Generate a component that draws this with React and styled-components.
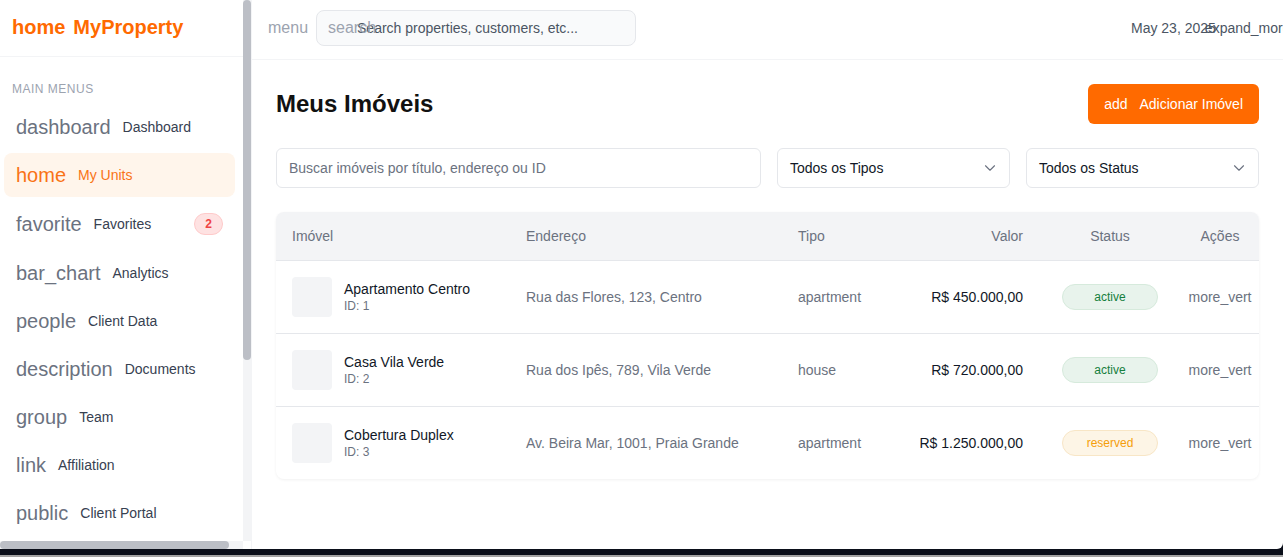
import React from 'react'
import styled, { createGlobalStyle } from 'styled-components'
import { ChevronDown } from 'lucide-react'

const GlobalStyle = createGlobalStyle`
  html, body {
    margin: 0;
    padding: 0;
    background: #0b0f1a;
    font-family: "Liberation Sans", Arial, sans-serif;
  }
  * { box-sizing: border-box; }
`

const menus = [
  { icon: 'dashboard', label: 'Dashboard' },
  { icon: 'home', label: 'My Units', active: true },
  { icon: 'favorite', label: 'Favorites', badge: 2 },
  { icon: 'bar_chart', label: 'Analytics' },
  { icon: 'people', label: 'Client Data' },
  { icon: 'description', label: 'Documents' },
  { icon: 'group', label: 'Team' },
  { icon: 'link', label: 'Affiliation' },
  { icon: 'public', label: 'Client Portal' },
]

const properties = [
  { id: 1, title: 'Apartamento Centro', address: 'Rua das Flores, 123, Centro', type: 'apartment', price: 'R$ 450.000,00', status: 'active' },
  { id: 2, title: 'Casa Vila Verde', address: 'Rua dos Ipês, 789, Vila Verde', type: 'house', price: 'R$ 720.000,00', status: 'active' },
  { id: 3, title: 'Cobertura Duplex', address: 'Av. Beira Mar, 1001, Praia Grande', type: 'apartment', price: 'R$ 1.250.000,00', status: 'reserved' },
]

function App() {
  return (
    <Page>
      <GlobalStyle />
      <Shell>
        <Sidebar>
          <SideBody>
            <SideScroll>
              <Brand>
                <span>home</span>
                <span>MyProperty</span>
              </Brand>
              <SectionLabel>Main Menus</SectionLabel>
              <NavList>
                {menus.map(m => (
                  <NavItem key={m.label} $active={m.active}>
                    <NavIcon $active={m.active}>{m.icon}</NavIcon>
                    <NavLabel $active={m.active}>{m.label}</NavLabel>
                    {m.badge && <Badge>{m.badge}</Badge>}
                  </NavItem>
                ))}
              </NavList>
            </SideScroll>
            <VTrack>
              <VThumb />
            </VTrack>
          </SideBody>
          <HBar>
            <HTrack>
              <HThumb />
            </HTrack>
            <Corner />
          </HBar>
        </Sidebar>

        <Main>
          <TopBar>
            <MenuIcon>menu</MenuIcon>
            <SearchWrap>
              <SearchIcon>search</SearchIcon>
              <SearchInput placeholder="Search properties, customers, etc..." />
            </SearchWrap>
            <DateGroup>
              <span>May 23, 2025</span>
              <ExpandIcon>expand_more</ExpandIcon>
            </DateGroup>
          </TopBar>

          <Content>
            <TitleRow>
              <Title>Meus Imóveis</Title>
              <AddButton>
                <span>add</span>
                <span>Adicionar Imóvel</span>
              </AddButton>
            </TitleRow>

            <Filters>
              <FilterInput placeholder="Buscar imóveis por título, endereço ou ID" />
              <SelectBox>
                <span>Todos os Tipos</span>
                <ChevronDown size={18} strokeWidth={1.5} color="#6b7280" />
              </SelectBox>
              <SelectBox>
                <span>Todos os Status</span>
                <ChevronDown size={18} strokeWidth={1.5} color="#6b7280" />
              </SelectBox>
            </Filters>

            <Card>
              <Table>
                <thead>
                  <tr>
                    <Th $w={234}>Imóvel</Th>
                    <Th $w={272}>Endereço</Th>
                    <Th $w={110}>Tipo</Th>
                    <Th $w={147} $align="right">Valor</Th>
                    <Th $w={142} $align="center">Status</Th>
                    <Th $w={78} $align="center" $tight>Ações</Th>
                  </tr>
                </thead>
                <tbody>
                  {properties.map(p => (
                    <tr key={p.id}>
                      <Td>
                        <PropCell>
                          <Thumb />
                          <div>
                            <PropName>{p.title}</PropName>
                            <PropId>ID: {p.id}</PropId>
                          </div>
                        </PropCell>
                      </Td>
                      <Td $muted>{p.address}</Td>
                      <Td $muted>{p.type}</Td>
                      <Td $align="right">{p.price}</Td>
                      <Td $align="center">
                        <Status $status={p.status}>{p.status}</Status>
                      </Td>
                      <Td $align="center" $muted $tight>more_vert</Td>
                    </tr>
                  ))}
                </tbody>
              </Table>
            </Card>
          </Content>
        </Main>
      </Shell>
    </Page>
  )
}

const Page = styled.div`
  height: 557px;
  background: #0b0f1a;
  border-bottom: 2px solid #a3a3a3;
`

const Shell = styled.div`
  display: flex;
  height: 549px;
  background: #fff;
  border-bottom-right-radius: 6px;
  overflow: hidden;
`

const Sidebar = styled.aside`
  width: 252px;
  flex-shrink: 0;
  height: 100%;
  display: flex;
  flex-direction: column;
  background: #fff;
  border-right: 1px solid #f3f4f6;
`

const SideBody = styled.div`
  flex: 1;
  min-height: 0;
  display: flex;
`

const SideScroll = styled.div`
  width: 243px;
  overflow: hidden;
`

const VTrack = styled.div`
  width: 8px;
  background: #f3f4f6;
`

const VThumb = styled.div`
  height: 360px;
  border-radius: 4px;
  background: #bcbfc6;
`

const HBar = styled.div`
  height: 8px;
  display: flex;
`

const HTrack = styled.div`
  width: 243px;
  background: #f3f4f6;
`

const HThumb = styled.div`
  width: 229px;
  height: 100%;
  border-radius: 4px;
  background: #bcbfc6;
`

const Corner = styled.div`
  width: 8px;
  background: #fff;
`

const Brand = styled.div`
  height: 57px;
  display: flex;
  align-items: center;
  gap: 8px;
  padding: 0 12px 2px;
  border-bottom: 1px solid #f3f4f6;
  color: #ff6a00;
  font-size: 20px;
  font-weight: 700;
`

const SectionLabel = styled.div`
  padding: 24px 12px 8px;
  font-size: 12px;
  line-height: 16px;
  font-weight: 500;
  color: #9ca3af;
  letter-spacing: 0.5px;
  text-transform: uppercase;
`

const NavList = styled.nav`
  padding: 0 8px 0 4px;
`

const NavItem = styled.div`
  display: flex;
  align-items: center;
  gap: 12px;
  min-height: 44px;
  padding: 0 12px;
  margin-bottom: 4px;
  border-radius: 8px;
  white-space: nowrap;
  background: ${p => (p.$active ? '#fff5eb' : 'transparent')};
`

const NavIcon = styled.span`
  font-size: 20px;
  line-height: 24px;
  color: ${p => (p.$active ? '#f97316' : '#6b7280')};
`

const NavLabel = styled.span`
  font-size: 14px;
  color: ${p => (p.$active ? '#f97316' : '#374151')};
`

const Badge = styled.span`
  margin: 12px 0 12px auto;
  padding: 2px 10px;
  font-size: 12px;
  line-height: 16px;
  font-weight: 700;
  color: #ef4444;
  background: #fee2e2;
  border: 1px solid #fecaca;
  border-radius: 999px;
`

const Main = styled.main`
  flex: 1;
  min-width: 0;
  display: flex;
  flex-direction: column;
`

const TopBar = styled.header`
  height: 60px;
  display: flex;
  align-items: flex-start;
  gap: 8px;
  padding: 10px 0 0 16px;
  border-bottom: 1px solid #f3f4f6;
`

const MenuIcon = styled.span`
  font-size: 16px;
  line-height: 36px;
  color: #9ca3af;
`

const SearchWrap = styled.div`
  position: relative;
  width: 320px;
`

const SearchIcon = styled.span`
  position: absolute;
  left: 12px;
  top: 0;
  font-size: 16px;
  line-height: 36px;
  color: #9ca3af;
`

const SearchInput = styled.input`
  width: 100%;
  height: 36px;
  padding: 0 12px 0 40px;
  border: 1px solid #e5e7eb;
  border-radius: 8px;
  background: #f9fafb;
  font-family: inherit;
  font-size: 14px;
  outline: none;
  &::placeholder {
    color: #4b5563;
  }
`

const DateGroup = styled.div`
  margin-left: auto;
  width: 152px;
  flex-shrink: 0;
  display: flex;
  align-items: center;
  height: 36px;
  overflow: hidden;
  white-space: nowrap;
  font-size: 14px;
  color: #4b5563;
`

const ExpandIcon = styled.span`
  margin-left: -11px;
`

const Content = styled.section`
  padding: 24px;
`

const TitleRow = styled.div`
  display: flex;
  align-items: center;
  justify-content: space-between;
  height: 40px;
  margin-bottom: 24px;
`

const Title = styled.h1`
  margin: 0;
  font-size: 24px;
  font-weight: 700;
  color: #111;
`

const AddButton = styled.button`
  display: flex;
  align-items: center;
  gap: 12px;
  height: 40px;
  padding: 0 16px;
  border: none;
  border-radius: 6px;
  background: #ff6a00;
  color: #fff;
  font-family: inherit;
  font-size: 14px;
`

const Filters = styled.div`
  display: flex;
  gap: 16px;
  margin-bottom: 24px;
`

const FilterInput = styled.input`
  flex: 1;
  height: 40px;
  padding: 0 12px;
  border: 1px solid #e5e7eb;
  border-radius: 6px;
  background: #fff;
  font-family: inherit;
  font-size: 14px;
  outline: none;
  &::placeholder {
    color: #6b7280;
  }
`

const SelectBox = styled.div`
  width: 233px;
  height: 40px;
  display: flex;
  align-items: center;
  justify-content: space-between;
  padding: 0 10px 0 12px;
  border: 1px solid #e5e7eb;
  border-radius: 6px;
  font-size: 14px;
  color: #111827;
`

const Card = styled.div`
  border-radius: 8px;
  overflow: hidden;
  background: #fff;
  box-shadow: 0 1px 3px rgba(0, 0, 0, 0.06);
`

const Table = styled.table`
  width: 100%;
  table-layout: fixed;
  border-collapse: collapse;
  font-size: 14px;
`

const Th = styled.th`
  width: ${p => p.$w}px;
  padding: ${p => (p.$tight ? '14px 0' : '14px 16px')};
  line-height: 20px;
  text-align: ${p => p.$align || 'left'};
  font-weight: 400;
  color: #6b7280;
  background: #f3f4f6;
  border-bottom: 1px solid #e5e7eb;
`

const Td = styled.td`
  padding: ${p => (p.$tight ? '16px 0' : '16px')};
  text-align: ${p => p.$align || 'left'};
  color: ${p => (p.$muted ? '#6b7280' : '#111827')};
  border-bottom: 1px solid #e5e7eb;
  white-space: nowrap;
  tr:last-child & {
    border-bottom: none;
  }
`

const PropCell = styled.div`
  display: flex;
  align-items: center;
  gap: 12px;
`

const Thumb = styled.div`
  width: 40px;
  height: 40px;
  border-radius: 4px;
  background: #f3f4f6;
  flex-shrink: 0;
`

const PropName = styled.div`
  font-size: 14px;
  line-height: 18px;
  color: #111827;
`

const PropId = styled.div`
  font-size: 12px;
  line-height: 16px;
  color: #6b7280;
`

const statusColors = {
  active: { bg: '#e8f3ec', border: '#d6eadc', color: '#15803d' },
  reserved: { bg: '#fdf5e6', border: '#f8e6c6', color: '#f59e0b' },
}

const Status = styled.span`
  display: inline-block;
  width: 96px;
  line-height: 24px;
  font-size: 12px;
  border-radius: 999px;
  background: ${p => statusColors[p.$status].bg};
  border: 1px solid ${p => statusColors[p.$status].border};
  color: ${p => statusColors[p.$status].color};
`

export default App
